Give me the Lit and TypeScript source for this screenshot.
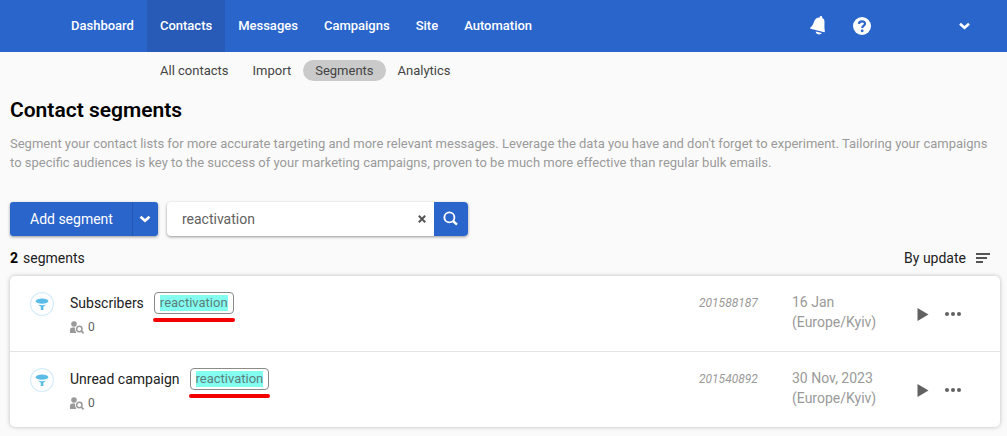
import { LitElement, html, css, svg } from "lit";
import { customElement, property } from "lit/decorators.js";
import { classMap } from "lit/directives/class-map.js";

interface Segment {
  name: string;
  tag: string;
  contacts: number;
  id: string;
  date: string;
  zone: string;
}

const NAV = ["Dashboard", "Contacts", "Messages", "Campaigns", "Site", "Automation"];
const SUBNAV = ["All contacts", "Import", "Segments", "Analytics"];
const SEGMENTS: Segment[] = [
  { name: "Subscribers", tag: "reactivation", contacts: 0, id: "201588187", date: "16 Jan", zone: "(Europe/Kyiv)" },
  { name: "Unread campaign", tag: "reactivation", contacts: 0, id: "201540892", date: "30 Nov, 2023", zone: "(Europe/Kyiv)" },
];

const chevron = svg`<path d="M1.5 1.8 L6 5.8 L10.5 1.8" fill="none" stroke="currentColor" stroke-width="2.6"/>`;

@customElement("top-bar")
export class TopBar extends LitElement {
  static styles = css`
    :host { display: block; }
    .bar { display: flex; align-items: stretch; justify-content: space-between; height: 52px; padding: 0 36px 0 58px; background: #2a65cb; }
    nav { display: flex; }
    .link { display: flex; align-items: center; padding: 0 13px; color: #fff; font-size: 13px; font-weight: 500; text-decoration: none; }
    .active { background: #285bb8; }
    .tools { display: flex; align-items: center; }
    button { display: flex; border: 0; padding: 0; background: none; color: #fff; cursor: pointer; }
    .help { margin: 0 87px 0 26px; }
  `;
  render() {
    return html`<header class="bar">
      <nav aria-label="Main">
        ${NAV.map((n) => html`<a href="#" class=${classMap({ link: true, active: n === "Contacts" })}>${n}</a>`)}
      </nav>
      <div class="tools">
        <button aria-label="Notifications">
          <svg width="18" height="22" viewBox="0 0 18 22" fill="currentColor">
            <path d="M10.8 2.6 C10.6 0.8 13 0.6 13.2 2.2 L13.3 3 C15.2 3.8 15.6 5.4 15.5 8 C15.4 11 15.3 13.2 15.9 16.2 L15.4 17.2 L1.4 13.8 L1.1 12.8 C3.4 11.2 4 9.8 4.9 7 C5.8 4.4 7.6 2.4 10.8 2.6Z"/>
            <path d="M6.6 16.6 L12.8 18.1 C11.6 20.4 7 20 6.6 16.6Z"/>
          </svg>
        </button>
        <button class="help" aria-label="Help">
          <svg width="18" height="18" viewBox="0 0 18 18">
            <circle cx="9" cy="9" r="9" fill="currentColor"/>
            <path d="M5.9 6.9 C6 3.4 12.1 3.5 12 6.8 C12 8.8 9.2 8.6 9.2 11" fill="none" stroke="#2a65cb" stroke-width="2.2"/>
            <circle cx="9.2" cy="13.8" r="1.4" fill="#2a65cb"/>
          </svg>
        </button>
        <button aria-label="Account menu"><svg width="13" height="8" viewBox="0 0 12 8">${chevron}</svg></button>
      </div>
    </header>`;
  }
}

@customElement("sub-nav")
export class SubNav extends LitElement {
  static styles = css`
    :host { display: block; }
    nav { display: flex; padding: 8px 148px 0; }
    .link { padding: 0 12px; border-radius: 11px; color: #444; font-size: 13px; line-height: 21px; text-decoration: none; white-space: nowrap; }
    .active { background: #cacaca; }
  `;
  render() {
    return html`<nav aria-label="Contacts">
      ${SUBNAV.map((n) => html`<a href="#" class=${classMap({ link: true, active: n === "Segments" })}>${n}</a>`)}
    </nav>`;
  }
}

@customElement("segment-toolbar")
export class SegmentToolbar extends LitElement {
  static styles = css`
    :host { display: block; }
    .tools { display: flex; gap: 9px; }
    .split, .search { display: flex; height: 34px; border-radius: 3px; overflow: hidden; box-shadow: 0 1px 3px rgba(0, 0, 0, 0.4); }
    button { display: flex; align-items: center; justify-content: center; border: 0; padding: 0; background: #2a65cb; color: #fff; font: inherit; cursor: pointer; }
    .add { padding: 0 19px 0 20px; font-weight: 400; }
    .more { width: 26px; border-left: 1px solid #2557b0; }
    .search { width: 301px; border-radius: 4px; background: #fff; }
    input { flex: 1; min-width: 0; border: 0; padding: 0 0 0 15px; outline: 0; background: none; color: #616161; font: inherit; font-size: 14px; }
    .clear { width: 24px; background: none; color: #555; }
    .go { width: 34px; }
  `;
  render() {
    return html`<div class="tools">
      <div class="split">
        <button class="add">Add segment</button>
        <button class="more" aria-label="More options"><svg width="12" height="8" viewBox="0 0 12 8">${chevron}</svg></button>
      </div>
      <form class="search" role="search">
        <input type="text" aria-label="Search segments" value="reactivation" />
        <button type="button" class="clear" aria-label="Clear">
          <svg width="8" height="8" viewBox="0 0 8 8"><path d="M0.8 0.8 L7.2 7.2 M7.2 0.8 L0.8 7.2" stroke="currentColor" stroke-width="2"/></svg>
        </button>
        <button type="button" class="go" aria-label="Search">
          <svg width="16" height="16" viewBox="0 0 16 16" fill="none" stroke="currentColor"><circle cx="6.4" cy="6.4" r="5" stroke-width="1.9"/><path d="M10 10 L14 13.6" stroke-width="2.4"/></svg>
        </button>
      </form>
    </div>`;
  }
}

@customElement("segment-row")
export class SegmentRow extends LitElement {
  @property({ attribute: false }) segment!: Segment;
  static styles = css`
    :host { display: block; }
    .row { display: grid; grid-template-columns: 40px minmax(0, 1fr) 93px 123px 46px; align-items: start; padding: 16px 39px 15px 20px; }
    .badge { display: block; }
    .title { display: flex; align-items: center; gap: 10px; height: 22px; color: #212121; }
    .tag { position: relative; box-sizing: border-box; height: 22px; padding: 2px 5px; border: 1px solid #8a8a8a; border-radius: 4px; font-size: 13px; line-height: 16px; }
    .tag::after { content: ""; position: absolute; left: -2px; right: -2px; top: 25px; height: 4px; border-radius: 2px; background: #f40000; }
    mark { display: block; background: #84fdf1; color: #5b7f7b; }
    .count { display: flex; align-items: center; gap: 4px; margin-top: 5px; font-size: 12px; line-height: 16px; color: #616161; }
    .id { font-size: 12px; line-height: 22px; font-style: italic; color: #9a9a9a; }
    .date { line-height: 20px; color: #9a9a9a; }
    .actions { display: flex; align-items: center; justify-content: flex-end; gap: 16px; height: 44px; }
    button { display: flex; border: 0; padding: 0; background: none; color: #616161; cursor: pointer; }
  `;
  render() {
    const s = this.segment;
    return html`<div class="row">
      <svg class="badge" width="24" height="24" viewBox="0 0 24 24">
        <circle cx="12" cy="12" r="11.4" fill="#fff" stroke="#d3ecf9" stroke-width="1.2"/>
        <ellipse cx="12" cy="9.2" rx="6.2" ry="2.6" fill="#5bbce8"/>
        <path d="M8 12.6 Q12 13.8 16 12.6 L13.4 14.8 V18 H10.8 V14.8Z" fill="#5bbce8"/>
      </svg>
      <div>
        <div class="title"><span>${s.name}</span><span class="tag"><mark>${s.tag}</mark></span></div>
        <div class="count">
          <svg width="14" height="13" viewBox="0 0 14 13" fill="#9a9a9a">
            <circle cx="4" cy="3" r="2.8"/>
            <path d="M0 12 V8.6 Q0 6.6 2.4 6.6 H5 Q4.4 9.6 6.4 12Z"/>
            <circle cx="9.3" cy="8" r="2.7" fill="none" stroke="#9a9a9a" stroke-width="1.5"/>
            <path d="M11.2 9.9 L13.6 12.3" stroke="#9a9a9a" stroke-width="1.7"/>
          </svg>
          <span>${s.contacts}</span>
        </div>
      </div>
      <div class="id">${s.id}</div>
      <div class="date">${s.date}<br />${s.zone}</div>
      <div class="actions">
        <button aria-label="Run"><svg width="12" height="13" viewBox="0 0 12 13"><path d="M0.5 0 L11.5 6.5 L0.5 13Z" fill="currentColor"/></svg></button>
        <button aria-label="More actions"><svg width="16" height="4" viewBox="0 0 16 4" fill="currentColor"><circle cx="2" cy="2" r="2"/><circle cx="8" cy="2" r="2"/><circle cx="14" cy="2" r="2"/></svg></button>
      </div>
    </div>`;
  }
}

@customElement("app-root")
export class AppRoot extends LitElement {
  static styles = css`
    :host { display: block; min-height: 100vh; background: #fafafa; color: #212121; font: 14px/20px Roboto, sans-serif; }
    main { padding: 16px 7px 8px 10px; }
    h1 { margin: 0; color: #000; font-size: 21px; line-height: 26px; font-weight: 600; }
    .lead { margin: 11px 0 30px; color: #9a9a9a; font-size: 13px; line-height: 19px; }
    .summary { display: flex; justify-content: space-between; padding: 12px 10px 8px 0; }
    .summary b { margin-right: 5px; color: #000; }
    .sort { display: flex; align-items: center; gap: 10px; border: 0; padding: 0; background: none; color: #212121; font: inherit; cursor: pointer; }
    .list { margin: 0; padding: 0; list-style: none; border-radius: 5px; background: #fff; box-shadow: 0 0 4px rgba(0, 0, 0, 0.25); }
    .item + .item { border-top: 1px solid #e4e4e4; }
  `;
  render() {
    return html`
      <top-bar></top-bar>
      <sub-nav></sub-nav>
      <main>
        <h1>Contact segments</h1>
        <p class="lead">Segment your contact lists for more accurate targeting and more relevant messages. Leverage the data you have and don't forget to experiment. Tailoring your campaigns to specific audiences is key to the success of your marketing campaigns, proven to be much more effective than regular bulk emails.</p>
        <segment-toolbar></segment-toolbar>
        <div class="summary">
          <span><b>${SEGMENTS.length}</b>segments</span>
          <button class="sort">By update
            <svg width="14" height="10" viewBox="0 0 14 10" fill="#555"><path d="M0 0H14V2H0Z M0 4H11V6H0Z M0 8H7V10H0Z"/></svg>
          </button>
        </div>
        <ul class="list">
          ${SEGMENTS.map((s) => html`<li class="item"><segment-row .segment=${s}></segment-row></li>`)}
        </ul>
      </main>
    `;
  }
}
